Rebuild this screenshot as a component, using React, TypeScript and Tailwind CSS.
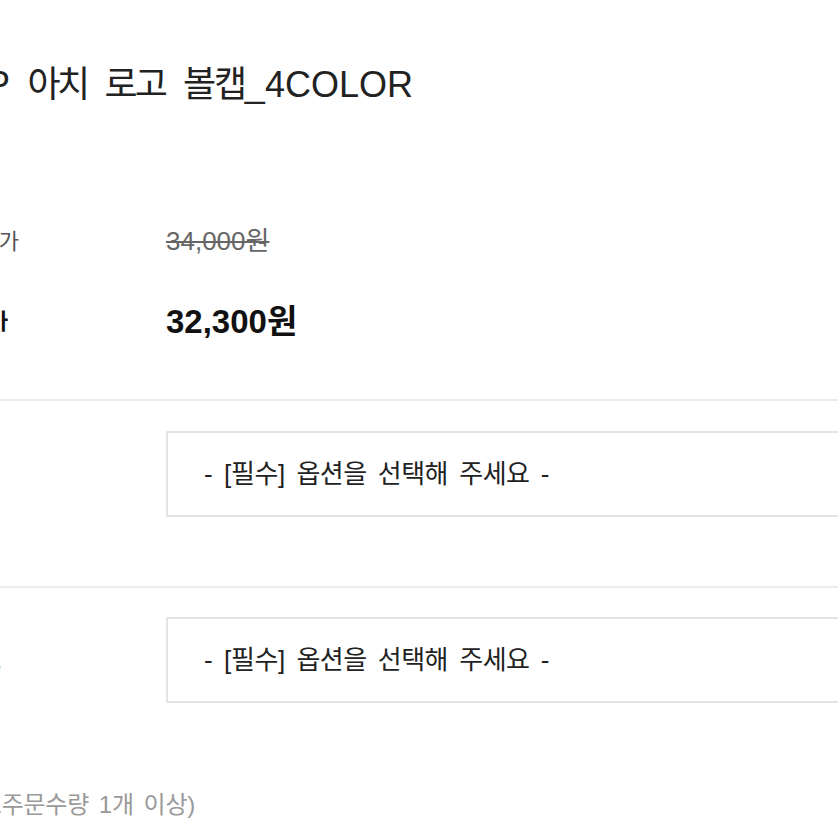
import React from "react";

function K({ children, t = "tracking-[-0.12em]" }: { children: React.ReactNode; t?: string }) {
  return <span className={t}>{children}</span>;
}

function OptionRow({ label, shift }: { label: string; shift: string }) {
  return (
    <div className="grid grid-cols-[216px_1fr] items-center">
      <div className={"text-[22px] text-[#444] whitespace-nowrap " + shift}>
        <K t="tracking-[-0.08em]">{label}</K>
      </div>
      <div className="h-[86px] border-2 border-[#e4e4e4] bg-white flex items-center pl-[36px] text-[26px] text-[#222] whitespace-nowrap">
        <span className="[word-spacing:4px]">
          - [<K t="tracking-[-0.02em]">필수</K>] <K t="tracking-[-0.02em]">옵션을</K>{" "}
          <K t="tracking-[-0.02em]">선택해</K> <K t="tracking-[-0.02em]">주세요</K> -
        </span>
      </div>
    </div>
  );
}

export default function App() {
  return (
    <div className="w-[838px] h-[838px] overflow-hidden bg-white font-['Liberation_Sans','Noto_Sans_CJK_KR',sans-serif]">
      <div className="-ml-[50px] w-[1000px] pt-[63px]">
        <h1 className="pl-[36px] h-[44px] leading-[44px] text-[36px] font-normal text-[#222] whitespace-nowrap [word-spacing:8px]">
          P <K t="tracking-[-0.1em]">아치</K> <K t="tracking-[-0.08em]">로고</K> <K t="tracking-[-0.06em]">볼캡</K>_4COLOR
        </h1>

        <div className="mt-[114px] grid grid-cols-[216px_1fr] items-center h-[40px]">
          <div className="pl-[10px] text-[22px] text-[#555] whitespace-nowrap">
            <K t="tracking-[-0.04em]">판매가</K>
          </div>
          <div>
            <span className="text-[26px] text-[#666] line-through decoration-[#666] decoration-2">
              34,000원
            </span>
          </div>
        </div>

        <div className="mt-[36px] grid grid-cols-[216px_1fr] items-center h-[40px]">
          <div className="pl-[2px] text-[22px] font-bold text-[#111] whitespace-nowrap">
            <K t="tracking-[-0.1em]">할인가</K>
          </div>
          <div className="text-[33px] font-bold text-[#111]">32,300원</div>
        </div>

        <div className="mt-[62px] border-t-2 border-[#ececec]" />
        <div className="mt-[30px]">
          <OptionRow label="색상" shift="" />
        </div>

        <div className="mt-[69px] border-t-2 border-[#ececec]" />
        <div className="mt-[29px]">
          <OptionRow label="사이트" shift="-ml-[6px]" />
        </div>

        <div className="mt-[87px] h-[30px] flex items-center text-[24px] text-[#999] whitespace-nowrap">
          <span className="[word-spacing:3px]">
            (<K t="tracking-[-0.01em]">최소주문수량</K> 1<K t="tracking-[-0.01em]">개</K>{" "}
            <K t="tracking-[-0.01em]">이상</K>)
          </span>
        </div>
      </div>
    </div>
  );
}
